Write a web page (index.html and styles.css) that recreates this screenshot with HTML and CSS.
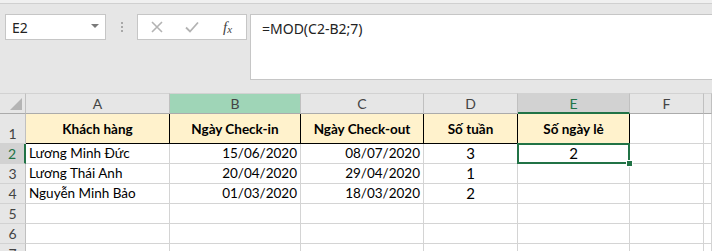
FILE: index.html
```html
<!DOCTYPE html>
<html lang="vi">
<head>
    <meta charset="UTF-8">
    <meta name="viewport" content="width=device-width, initial-scale=1.0">
    <title>Số ngày lẻ</title>
    <link rel="stylesheet" href="styles.css">
</head>
<body>
    <div class="topline"></div>
    <div class="formula-bar">
        <div class="name-box">
            <span>E2</span>
            <span class="caret"></span>
        </div>
        <div class="grip"><i></i><i></i><i></i></div>
        <div class="fx-box">
            <svg class="btn" width="14" height="14" viewBox="0 0 14 14"><path d="M2 2L12 12M12 2L2 12" stroke="#b3b3b3" stroke-width="1.6" fill="none"/></svg>
            <svg class="btn" width="16" height="14" viewBox="0 0 16 14"><path d="M2 7.5L6 11.5L14 2.5" stroke="#b3b3b3" stroke-width="1.8" fill="none"/></svg>
            <span class="fx">f<sub>x</sub></span>
        </div>
        <div class="formula">=MOD(C2-B2;7)</div>
    </div>

    <div class="sheet">
        <div class="corner"><span class="tri"></span></div>
        <div class="col-head">A</div>
        <div class="col-head col-b">B</div>
        <div class="col-head">C</div>
        <div class="col-head">D</div>
        <div class="col-head col-sel">E</div>
        <div class="col-head">F</div>
        <div class="col-head"></div>

        <div class="row-head tall">1</div>
        <div class="cell th first">Khách hàng</div>
        <div class="cell th">Ngày Check-in</div>
        <div class="cell th">Ngày Check-out</div>
        <div class="cell th">Số tuần</div>
        <div class="cell th">Số ngày lẻ</div>
        <div class="cell"></div>
        <div class="cell"></div>

        <div class="row-head row-sel">2</div>
        <div class="cell">Lương Minh Đức</div>
        <div class="cell num">15/06/2020</div>
        <div class="cell num">08/07/2020</div>
        <div class="cell mid">3</div>
        <div class="cell mid active">2</div>
        <div class="cell"></div>
        <div class="cell"></div>

        <div class="row-head">3</div>
        <div class="cell">Lương Thái Anh</div>
        <div class="cell num">20/04/2020</div>
        <div class="cell num">29/04/2020</div>
        <div class="cell mid">1</div>
        <div class="cell"></div>
        <div class="cell"></div>
        <div class="cell"></div>

        <div class="row-head">4</div>
        <div class="cell">Nguyễn Minh Bảo</div>
        <div class="cell num">01/03/2020</div>
        <div class="cell num">18/03/2020</div>
        <div class="cell mid">2</div>
        <div class="cell"></div>
        <div class="cell"></div>
        <div class="cell"></div>

        <div class="row-head">5</div>
        <div class="cell"></div><div class="cell"></div><div class="cell"></div><div class="cell"></div><div class="cell"></div><div class="cell"></div><div class="cell"></div>

        <div class="row-head">6</div>
        <div class="cell"></div><div class="cell"></div><div class="cell"></div><div class="cell"></div><div class="cell"></div><div class="cell"></div><div class="cell"></div>

        <div class="row-head">7</div>
        <div class="cell"></div><div class="cell"></div><div class="cell"></div><div class="cell"></div><div class="cell"></div><div class="cell"></div><div class="cell"></div>
    </div>
</body>
</html>
```

FILE: styles.css
```css
html, body {
    margin: 0;
    height: 251px;
    overflow: hidden;
}
body {
    background-color: #e6e6e6;
    font-family: Lato, "Liberation Sans", sans-serif;
    color: #000;
}
.topline {
    height: 3px;
    background-color: #f0f0f0;
    border-bottom: 1px solid #d0d0d0;
}

/* formula bar */
.formula-bar {
    display: flex;
    align-items: flex-start;
    height: 76px;
    padding: 10px 0 0 5px;
    box-sizing: border-box;
}
.name-box {
    width: 101px;
    height: 26px;
    box-sizing: border-box;
    background-color: #fff;
    border: 1px solid #c6c6c6;
    display: flex;
    align-items: center;
    justify-content: space-between;
    padding: 0 6px 0 6px;
    font-family: "Noto Sans", sans-serif;
    font-size: 14px;
    color: #222;
}
.caret {
    width: 0;
    height: 0;
    border-left: 4px solid transparent;
    border-right: 4px solid transparent;
    border-top: 4px solid #7a7a7a;
    margin-top: -2px;
}
.grip {
    width: 31px;
    height: 26px;
    display: flex;
    flex-direction: column;
    align-items: center;
    justify-content: center;
    gap: 2px;
}
.grip i {
    width: 2px;
    height: 2px;
    background-color: #a8a8a8;
}
.fx-box {
    width: 110px;
    height: 26px;
    box-sizing: border-box;
    background-color: #fff;
    border: 1px solid #c6c6c6;
    display: flex;
    align-items: center;
    padding-left: 12px;
}
.fx-box .btn {
    margin-right: 20px;
}
.fx-box .btn + .btn {
    margin-right: 23px;
}
.fx {
    font-family: "Liberation Serif", serif;
    font-style: italic;
    font-size: 15px;
    color: #444;
    line-height: 1;
}
.fx sub {
    font-size: 11px;
    vertical-align: -1px;
}
.formula {
    flex: 1;
    height: 66px;
    margin-left: 3px;
    box-sizing: border-box;
    background-color: #fff;
    border: 1px solid #c6c6c6;
    border-right: none;
    padding: 4px 0 0 11px;
    font-family: "Noto Sans", sans-serif;
    font-size: 14px;
    color: #222;
}

/* sheet grid */
.sheet {
    display: grid;
    grid-template-columns: 26px 144px 131px 123px 94px 112px 74px 1fr;
    grid-template-rows: 21px 30px repeat(6, 20px);
    margin-top: 13px;
    background-color: #fff;
    font-size: 13.5px;
}
.corner,
.col-head {
    background-color: #e6e6e6;
    border-top: 1px solid #d2d2d2;
    border-right: 1px solid #c0c0c0;
    border-bottom: 1px solid #ababab;
    box-sizing: border-box;
}
.corner {
    position: relative;
}
.tri {
    position: absolute;
    right: 3px;
    bottom: 3px;
    width: 0;
    height: 0;
    border-left: 12px solid transparent;
    border-bottom: 12px solid #b4b4b4;
}
.col-head {
    display: flex;
    align-items: center;
    justify-content: center;
    color: #444;
    font-size: 14px;
}
.col-b {
    background-color: #9fd5b7;
}
.col-sel {
    background-color: #d2d2d2;
    color: #217346;
    border-bottom: 2px solid #217346;
}
.row-head {
    background-color: #e6e6e6;
    border-right: 1px solid #c0c0c0;
    border-bottom: 1px solid #d2d2d2;
    box-sizing: border-box;
    display: flex;
    align-items: flex-end;
    justify-content: center;
    padding-bottom: 1px;
    color: #444;
    font-size: 14px;
}
.row-sel {
    background-color: #d2d2d2;
    color: #217346;
    border-right: 2px solid #217346;
}
.cell {
    border-right: 1px solid #d4d4d4;
    border-bottom: 1px solid #d4d4d4;
    box-sizing: border-box;
    padding: 0 3px;
    display: flex;
    align-items: flex-end;
    padding-bottom: 2px;
    white-space: nowrap;
    overflow: hidden;
}
.cell.th {
    background-color: #fff2cc;
    border-right-color: #000;
    border-bottom-color: #000;
    font-weight: bold;
    font-size: 13.5px;
    justify-content: center;
    align-items: center;
    padding-bottom: 0;
}
.cell.num {
    justify-content: flex-end;
}
.cell.mid {
    justify-content: center;
    font-size: 15px;
    padding-bottom: 1px;
}
.cell.active {
    position: relative;
    overflow: visible;
}
.cell.active::before {
    content: "";
    position: absolute;
    left: -1px;
    top: -1px;
    right: -1px;
    bottom: -1px;
    border: 2px solid #217346;
}
.cell.active::after {
    content: "";
    position: absolute;
    right: -4px;
    bottom: -4px;
    width: 5px;
    height: 5px;
    background-color: #217346;
    border: 1px solid #fff;
    z-index: 1;
}
```
